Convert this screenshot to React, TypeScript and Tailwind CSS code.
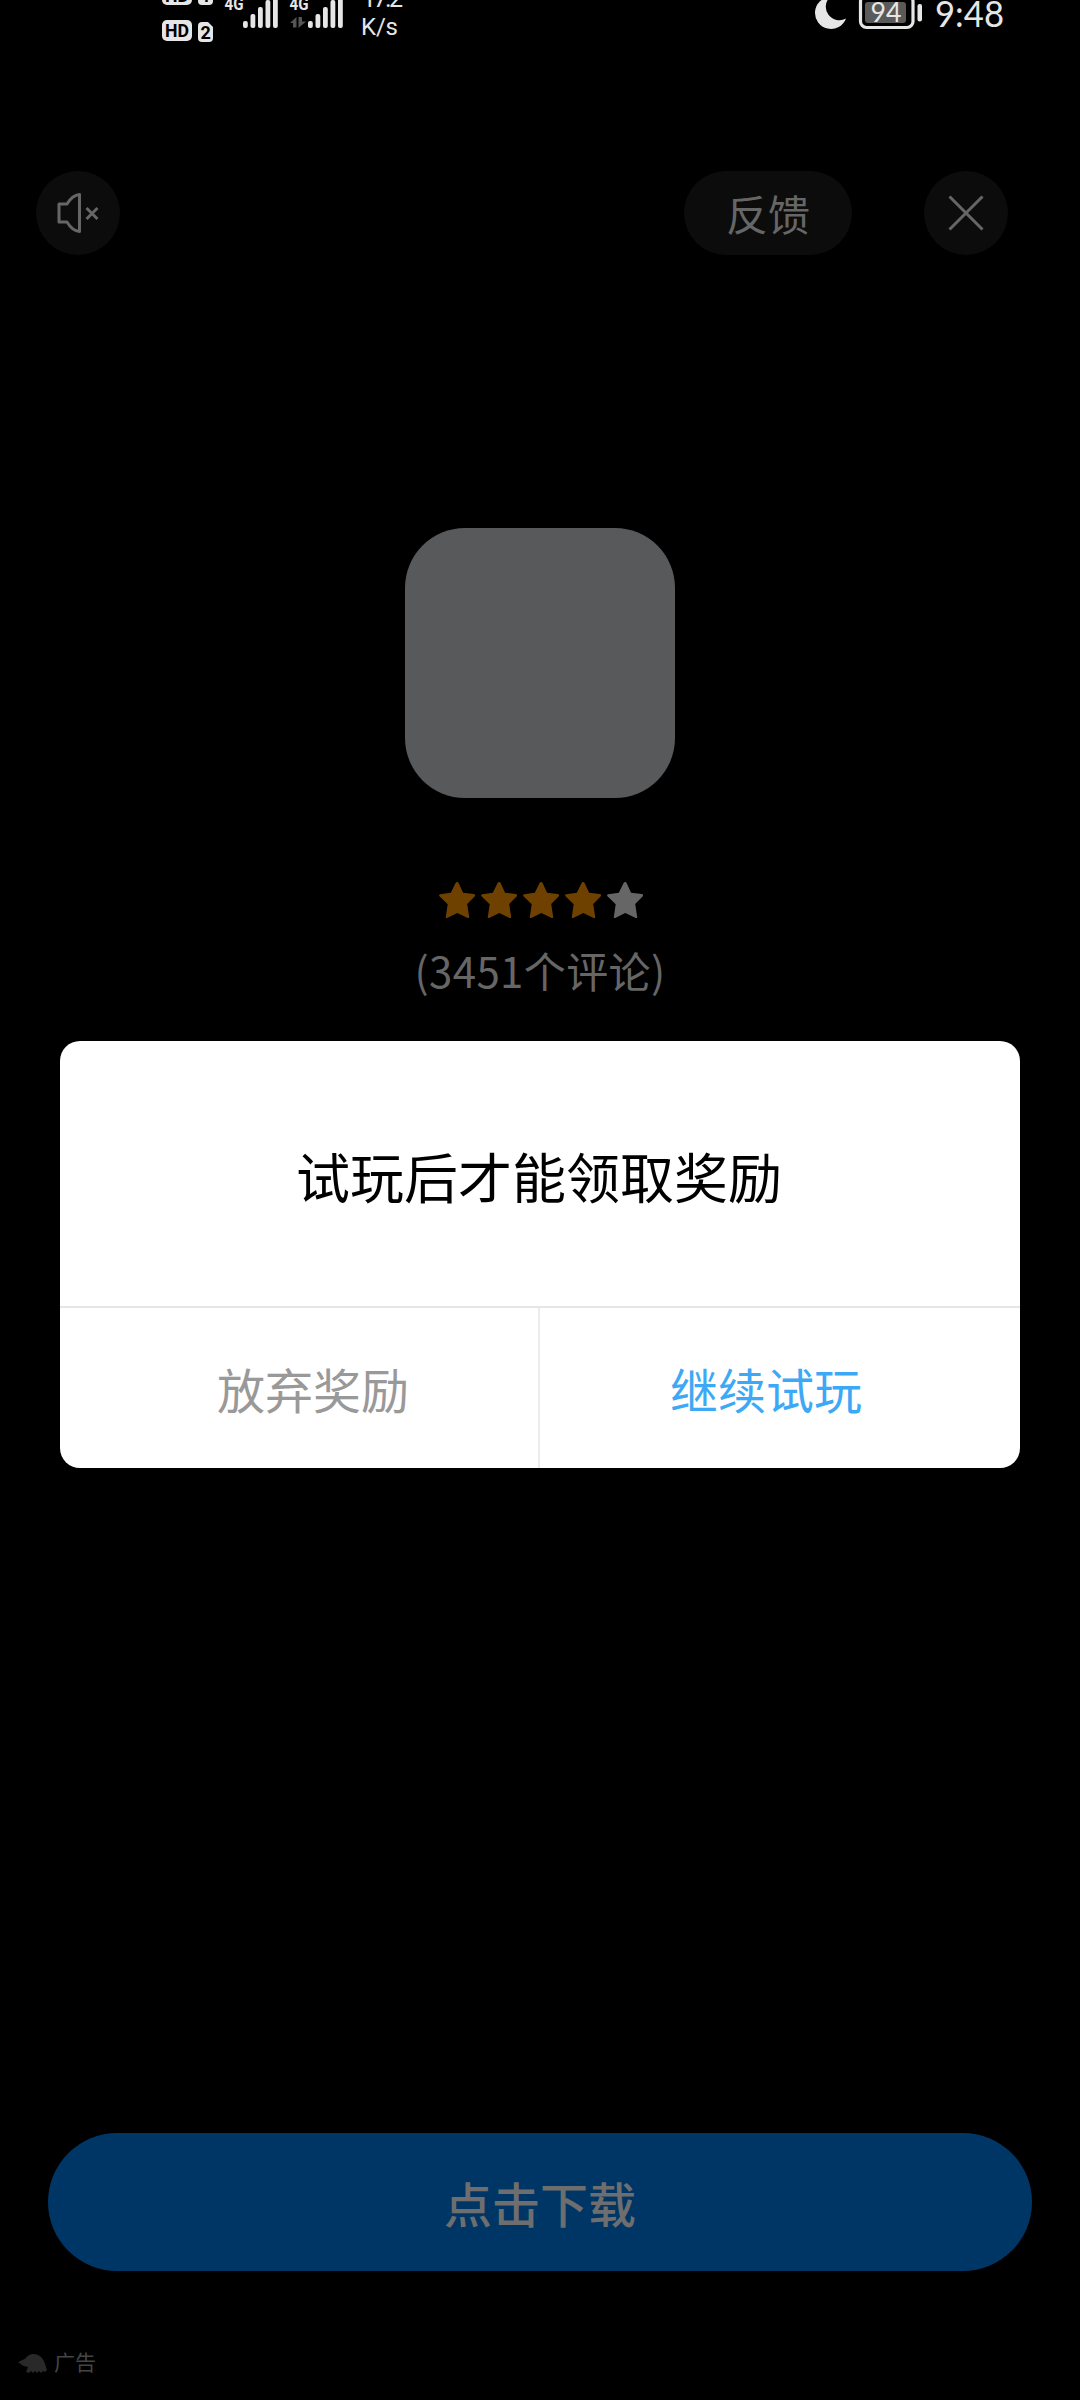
const STARS = [true, true, true, true, false];

function SignalBars({ x }: { x: number }) {
  const tops = [21, 14, 7, 0, -7];
  return (
    <g>
      {tops.map((top, i) => (
        <rect key={i} x={x + i * 7.5} y={top} width="4.8" height={28 - top} rx="2" />
      ))}
    </g>
  );
}

function NetworkStatus() {
  return (
    <svg width="270" height="48" viewBox="150 0 270 48" fill="#e6e6e6" fontFamily="Roboto, sans-serif">
      <rect x="162" y="-16" width="30" height="21" rx="5" />
      <path d="M198 -10a4 4 0 0 1 4-4h6l5 5v10a4 4 0 0 1-4 4h-7a4 4 0 0 1-4-4z" />
      <text x="165" y="1.500" fontSize="19" fontWeight="700" fill="#000" textLength="24" lengthAdjust="spacingAndGlyphs">HD</text>
      <text x="201" y="2" fontSize="17" fontWeight="700" fill="#000">1</text>
      <rect x="162" y="20" width="30" height="21" rx="5" />
      <path d="M198 26a4 4 0 0 1 4-4h6l5 5v11a4 4 0 0 1-4 4h-7a4 4 0 0 1-4-4z" />
      <text x="165" y="37.300" fontSize="19" fontWeight="700" fill="#000" textLength="24" lengthAdjust="spacingAndGlyphs">HD</text>
      <text x="200.500" y="38.500" fontSize="18" fontWeight="700" fill="#000">2</text>
      <text x="224.500" y="9.500" fontSize="19" fontWeight="700" textLength="19" lengthAdjust="spacingAndGlyphs">4G</text>
      <SignalBars x={243} />
      <text x="289.500" y="9.500" fontSize="19" fontWeight="700" textLength="19" lengthAdjust="spacingAndGlyphs">4G</text>
      <path d="M290 23l6.500-6v10.500h-3.500v-4.500zM298.500 17h3.500v4.500h4l-7.500 6.500z" fill="#555" />
      <SignalBars x={308} />
      <text x="362" y="7" fontSize="25" textLength="41">17.2</text>
      <text x="361" y="34.500" fontSize="24" textLength="37">K/s</text>
    </svg>
  );
}

function DeviceStatus() {
  return (
    <svg width="210" height="48" viewBox="810 0 210 48" fill="#e6e6e6" fontFamily="Lato, sans-serif">
      <path d="M830-3a16 16 0 1 0 16 21.500a13.500 13.500 0 0 1-16-21.500z" />
      <rect x="860.500" y="-4.500" width="52.500" height="32" rx="6" fill="none" stroke="#e6e6e6" strokeWidth="3.200" />
      <rect x="865" y="2" width="41" height="21" rx="3" fill="#5a5a5a" />
      <rect x="917.500" y="4" width="4.500" height="17.500" rx="2" />
      <text x="870.500" y="22.300" fontSize="27" textLength="31" lengthAdjust="spacingAndGlyphs">94</text>
      <text x="935" y="26.500" fontSize="37" textLength="69" lengthAdjust="spacingAndGlyphs">9:48</text>
    </svg>
  );
}

function MuteIcon() {
  return (
    <svg width="84" height="84" viewBox="0 0 84 84" fill="none" stroke="#666" strokeWidth="3">
      <path d="M23 33h8c3-5 7-9 12.500-9.500v37c-5.500-.5-9.500-4.500-12.500-9.500h-8z" strokeLinejoin="round" />
      <path d="M50.500 37l11 11M61.500 37l-11 11" />
    </svg>
  );
}

function Star({ filled }: { filled: boolean }) {
  return (
    <svg width="36" height="36" viewBox="0 0 36 36" className={filled ? "fill-[#6f4100]" : "fill-[#666]"}>
      <path d="M18.100 0c.7 0 1.200.4 1.500 1.100l4.500 9.600 10.700 1.400c1.300.2 1.700 1.300.8 2.300l-7.400 7.600 2 13c.1 1-.7 1.400-1.500 1l-10.400-5-10.100 5c-.9.400-1.600-.1-1.400-1l1.900-12.700-8.200-8c-.8-.9-.4-1.900.8-2.100l10.500-1.500 4.800-9.600c.3-.7.800-1.100 1.500-1.100z" />
    </svg>
  );
}

export default function App() {
  return (
    <div className="relative flex h-[2400px] w-[1080px] flex-col overflow-hidden bg-black font-['Noto_Sans_CJK_SC',sans-serif] text-[#666]">
      <div className="flex h-12 shrink-0 justify-between pr-[60px] pl-[150px]">
        <NetworkStatus />
        <DeviceStatus />
      </div>

      <header className="mt-[123px] flex h-[84px] shrink-0 items-center pr-[72px] pl-9">
        <button type="button" className="h-[84px] w-[84px] rounded-full bg-[#0c0c0c]">
          <MuteIcon />
        </button>
        <button type="button" className="ml-auto flex h-[84px] w-[168px] items-center justify-center rounded-full bg-[#0c0c0c] text-[42px] leading-none">
          反馈
        </button>
        <button type="button" className="ml-[72px] h-[84px] w-[84px] rounded-full bg-[#0c0c0c]">
          <svg width="84" height="84" viewBox="0 0 84 84" stroke="#666" strokeWidth="3">
            <path d="M25.500 25.500l33 33M58.500 25.500l-33 33" />
          </svg>
        </button>
      </header>

      <main className="mt-[273px] flex flex-col items-center">
        <div className="h-[270px] w-[270px] rounded-[60px] bg-[#58595b]" />
        <div className="mt-[84px] flex gap-1.5 pl-[2px]">
          {STARS.map((filled, i) => (
            <Star key={i} filled={filled} />
          ))}
        </div>
        <p className="mt-[22px] text-[42px] leading-[60px] tracking-[0.4px]">(3451个评论)</p>
      </main>

      <footer className="mt-auto">
        <button type="button" className="mx-12 flex h-[138px] w-[984px] items-center justify-center rounded-full bg-[#003666] text-5xl font-medium text-[#6e6e6e]">
          点击下载
        </button>
        <div className="mt-[75px] flex h-[54px] items-start gap-1.5 pl-[18px] text-[#454545]">
          <svg width="30" height="30" viewBox="0 0 30 30" fill="#292929" className="mt-1">
            <path d="M0 13c1-2 4-3 7-4 3-5 9-6 13-4 5 2 7 8 9 15l-2 2-2-1-2 2-2-2-2 2-2-2-2 2-2-2-2 2-3-1 2-5c-3-1-7-1-8-4z" />
          </svg>
          <span className="text-[21px] leading-[30px]">广告</span>
        </div>
      </footer>

      {/* reward dialog */}
      <div className="absolute inset-x-[60px] top-[1041px] flex h-[427px] flex-col overflow-hidden rounded-[20px] bg-white">
        <h2 className="flex h-[265px] items-center justify-center pt-1 pr-[2px] text-[54px] leading-none text-black">
          试玩后才能领取奖励
        </h2>
        <div className="flex flex-1 border-t-2 border-[#e6e6e6] text-5xl">
          <button type="button" className="flex w-[480px] items-center justify-center border-r-2 border-[#ececec] pl-[28px] text-[#999]">
            放弃奖励
          </button>
          <button type="button" className="flex flex-1 items-center justify-center pr-[28px] text-[#3da8f5]">
            继续试玩
          </button>
        </div>
      </div>
    </div>
  );
}
